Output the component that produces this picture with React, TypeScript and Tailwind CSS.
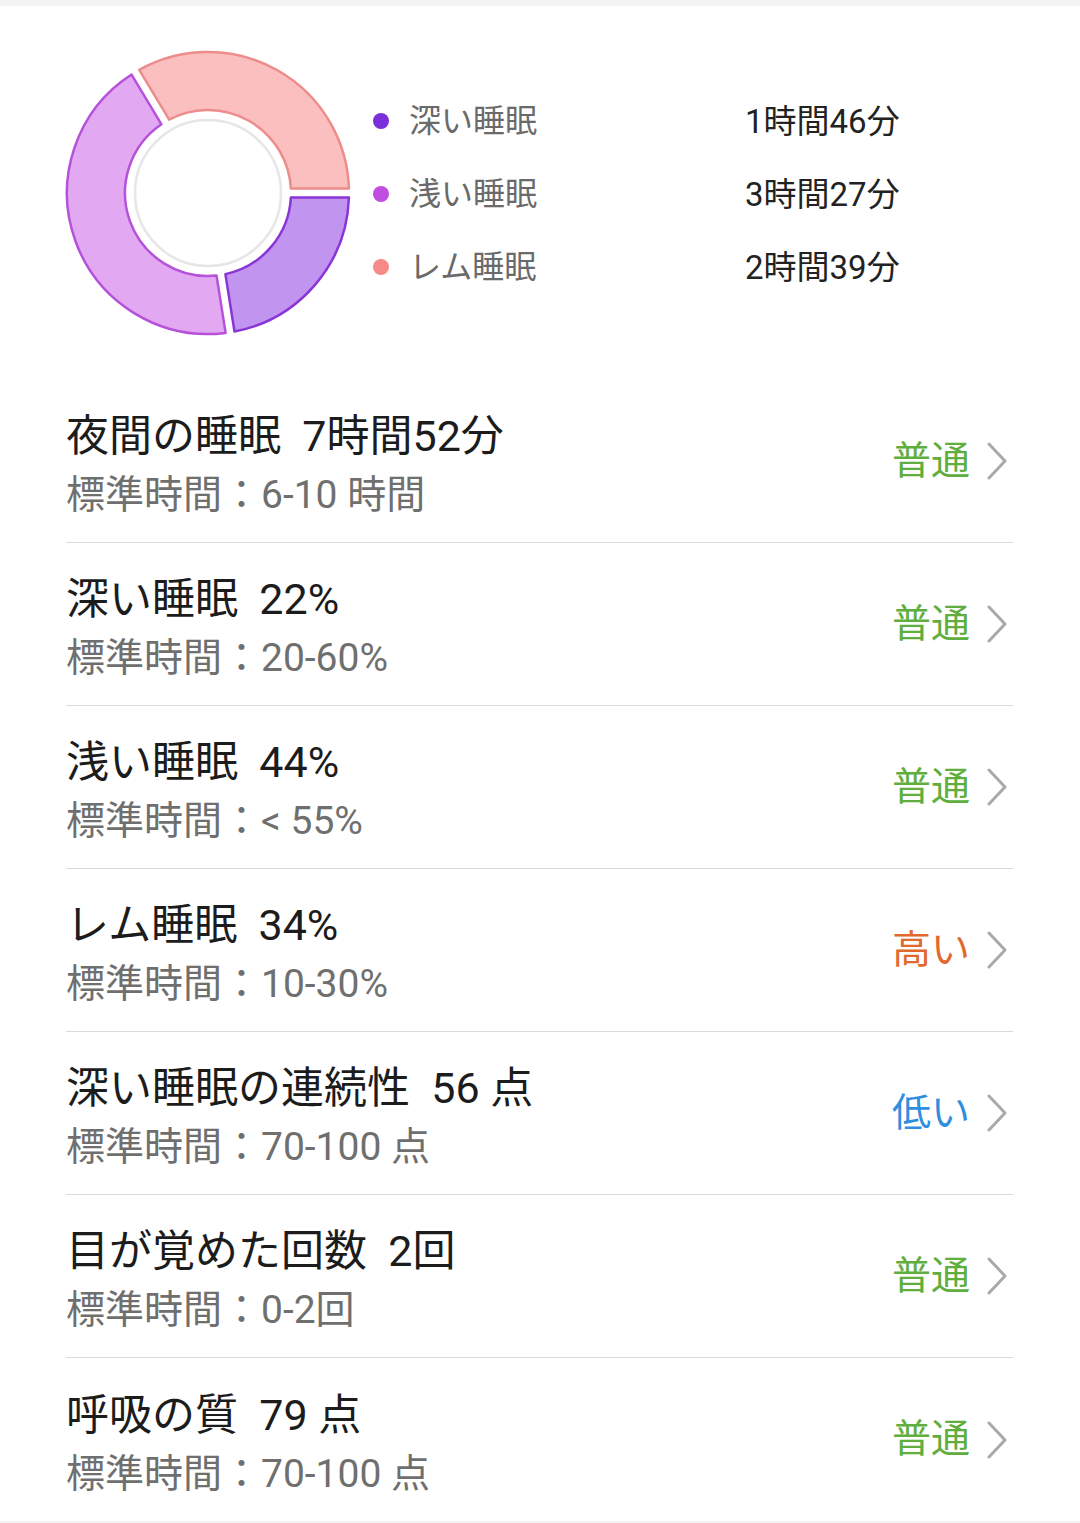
const font = "font-['Roboto','Noto_Sans_CJK_JP',sans-serif]";

type Seg = { from: number; to: number; fill: string; stroke: string };

const segments: Seg[] = [
  { from: 0, to: 81, fill: "#c195ef", stroke: "#8a35d6" },
  { from: 81, to: 239, fill: "#e3a8f2", stroke: "#b652da" },
  { from: 239, to: 360, fill: "#fbbfbf", stroke: "#ec8d8a" },
];

function pt(cx: number, cy: number, rad: number, deg: number) {
  const a = (deg * Math.PI) / 180;
  return `${(cx + rad * Math.cos(a)).toFixed(2)} ${(cy + rad * Math.sin(a)).toFixed(2)}`;
}

function arcPath(cx: number, cy: number, R: number, r: number, a0: number, a1: number, gap: number) {
  const dO = (Math.asin(gap / 2 / R) * 180) / Math.PI;
  const dI = (Math.asin(gap / 2 / r) * 180) / Math.PI;
  const largeO = a1 - a0 - 2 * dO > 180 ? 1 : 0;
  const largeI = a1 - a0 - 2 * dI > 180 ? 1 : 0;
  return [
    `M ${pt(cx, cy, R, a0 + dO)}`,
    `A ${R} ${R} 0 ${largeO} 1 ${pt(cx, cy, R, a1 - dO)}`,
    `L ${pt(cx, cy, r, a1 - dI)}`,
    `A ${r} ${r} 0 ${largeI} 0 ${pt(cx, cy, r, a0 + dI)}`,
    "Z",
  ].join(" ");
}

function Donut() {
  return (
    <svg width="300" height="300" viewBox="0 0 300 300" className="ml-[58px] shrink-0">
      {segments.map((s, i) => (
        <path key={i} d={arcPath(150, 150, 141, 83, s.from, s.to, 9)} fill={s.fill} stroke={s.stroke} strokeWidth="2.5" strokeLinejoin="round" />
      ))}
      <circle cx="150" cy="150" r="73" fill="#fff" stroke="#e6e6e6" strokeWidth="2.5" />
    </svg>
  );
}

const legend = [
  { dot: "bg-[#7b2fd8]", label: "深い睡眠", value: "1時間46分" },
  { dot: "bg-[#c04ee0]", label: "浅い睡眠", value: "3時間27分" },
  { dot: "bg-[#f68a86]", label: "レム睡眠", value: "2時間39分" },
];

const rows = [
  { title: "夜間の睡眠  7時間52分", sub: "標準時間：6-10 時間", status: "普通", color: "text-[#5fae3e]" },
  { title: "深い睡眠  22%", sub: "標準時間：20-60%", status: "普通", color: "text-[#5fae3e]" },
  { title: "浅い睡眠  44%", sub: "標準時間：< 55%", status: "普通", color: "text-[#5fae3e]" },
  { title: "レム睡眠  34%", sub: "標準時間：10-30%", status: "高い", color: "text-[#e2692c]" },
  { title: "深い睡眠の連続性  56 点", sub: "標準時間：70-100 点", status: "低い", color: "text-[#2f8ee0]" },
  { title: "目が覚めた回数  2回", sub: "標準時間：0-2回", status: "普通", color: "text-[#5fae3e]" },
  { title: "呼吸の質  79 点", sub: "標準時間：70-100 点", status: "普通", color: "text-[#5fae3e]" },
];

function Chevron() {
  return (
    <svg width="20" height="38" viewBox="0 0 20 38" className="ml-[17px] mr-[6px]">
      <polyline points="2,2 18,19 2,36" fill="none" stroke="#a9a9a9" strokeWidth="3" strokeLinecap="round" strokeLinejoin="round" />
    </svg>
  );
}

export default function App() {
  return (
    <div className={`w-[1080px] bg-white ${font}`}>
      <div className="h-[6px] bg-[#f4f4f4]" />
      <div className="flex h-[374px] items-center">
        <Donut />
        <div className="ml-[15px] flex flex-col pt-[2px]">
          {legend.map((l) => (
            <div key={l.label} className="flex h-[73px] items-center">
              <span className={`h-4 w-4 rounded-full ${l.dot}`} />
              <span className="ml-5 w-[336px] text-[32px] leading-none text-[#6a6a6a]">{l.label}</span>
              <span className="text-[33px] leading-none text-[#222]">{l.value}</span>
            </div>
          ))}
        </div>
      </div>
      <div className="ml-[66px] mr-[67px]">
        {rows.map((r, i) => (
          <div key={i} className={`flex h-[163px] items-center ${i < rows.length - 1 ? "border-b border-[#dadada]" : ""}`}>
            <div className="flex flex-1 flex-col pt-[8px]">
              <div className="whitespace-pre text-[43px] leading-[48px] text-[#1c1c1c]">{r.title}</div>
              <div className="mt-[12px] whitespace-pre text-[39px] leading-[46px] text-[#6f6f6f]">{r.sub}</div>
            </div>
            <div className="flex items-center">
              <span className={`text-[39px] leading-none ${r.color}`}>{r.status}</span>
              <Chevron />
            </div>
          </div>
        ))}
      </div>
      <div className="h-[2px] bg-[#f4f4f4]" />
    </div>
  );
}
